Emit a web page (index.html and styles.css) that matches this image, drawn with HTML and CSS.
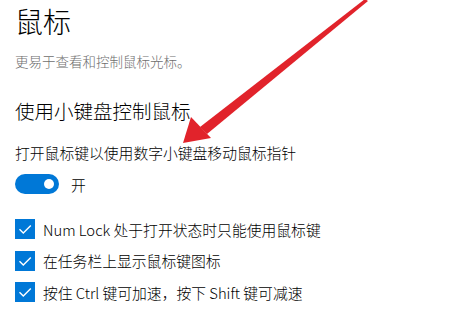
FILE: index.html
```html
<!DOCTYPE html>
<html lang="zh-CN">
<head>
<meta charset="utf-8">
<link rel="stylesheet" href="styles.css">
</head>
<body>
<main class="page">
  <h1 class="title">鼠标</h1>
  <p class="subtitle">更易于查看和控制鼠标光标。</p>
  <h2 class="section">使用小键盘控制鼠标</h2>
  <p class="label">打开鼠标键以使用数字小键盘移动鼠标指针</p>
  <div class="toggle-row">
    <span class="toggle"><span class="knob"></span></span>
    <span class="toggle-text">开</span>
  </div>
  <ul class="checks">
    <li class="check"><span class="box"><svg viewBox="0 0 20 20" width="20" height="20"><path d="M4.5 10.2 L8.3 14 L15.8 6.5" fill="none" stroke="#fff" stroke-width="1.4"/></svg></span>Num Lock 处于打开状态时只能使用鼠标键</li>
    <li class="check"><span class="box"><svg viewBox="0 0 20 20" width="20" height="20"><path d="M4.5 10.2 L8.3 14 L15.8 6.5" fill="none" stroke="#fff" stroke-width="1.4"/></svg></span>在任务栏上显示鼠标键图标</li>
    <li class="check"><span class="box"><svg viewBox="0 0 20 20" width="20" height="20"><path d="M4.5 10.2 L8.3 14 L15.8 6.5" fill="none" stroke="#fff" stroke-width="1.4"/></svg></span>按住 Ctrl 键可加速，按下 Shift 键可减速</li>
  </ul>
</main>
<svg class="arrow" width="450" height="321" viewBox="0 0 450 321">
  <polygon points="365,-1 368,1 207,134 200,127" fill="#e1232b"/>
  <polygon points="183,143 191,117 211,138" fill="#e1232b"/>
</svg>
</body>
</html>
```

FILE: styles.css
```css
html, body {
  margin: 0;
  padding: 0;
  background: #fff;
  width: 450px;
  height: 321px;
  overflow: hidden;
}
body {
  font-family: "Segoe UI", "Noto Sans CJK SC", "Open Sans", sans-serif;
  font-weight: 300;
  color: #000;
  position: relative;
}
.page {
  padding: 2px 0 0 15px;
}
.title {
  margin: 0;
  font-size: 28px;
  font-weight: 300;
  line-height: 38px;
}
.subtitle {
  margin: 11px 0 0;
  font-size: 13.5px;
  line-height: 20px;
  color: #6e6e6e;
}
.section {
  margin: 26px 0 0;
  font-size: 19.5px;
  font-weight: 300;
  line-height: 28px;
}
.label {
  margin: 17px 0 0;
  font-size: 14.8px;
  line-height: 22px;
}
.toggle-row {
  display: flex;
  align-items: center;
  gap: 12px;
  margin-top: 8px;
  height: 24px;
}
.toggle {
  width: 44px;
  height: 20px;
  border-radius: 10px;
  background: #0078d7;
  display: flex;
  align-items: center;
  justify-content: flex-end;
  padding-right: 5px;
  box-sizing: border-box;
}
.knob {
  width: 10px;
  height: 10px;
  border-radius: 50%;
  background: #fff;
}
.toggle-text {
  font-size: 14.8px;
}
.checks {
  list-style: none;
  margin: 23px 0 0;
  padding: 0;
  display: flex;
  flex-direction: column;
  gap: 11.5px;
}
.check {
  display: flex;
  align-items: center;
  gap: 8px;
  height: 20px;
  font-size: 14.8px;
}
.box {
  width: 20px;
  height: 20px;
  background: #0078d7;
  display: block;
  flex: none;
}
.box svg {
  display: block;
}
.arrow {
  position: absolute;
  left: 0;
  top: 0;
  pointer-events: none;
}
```
